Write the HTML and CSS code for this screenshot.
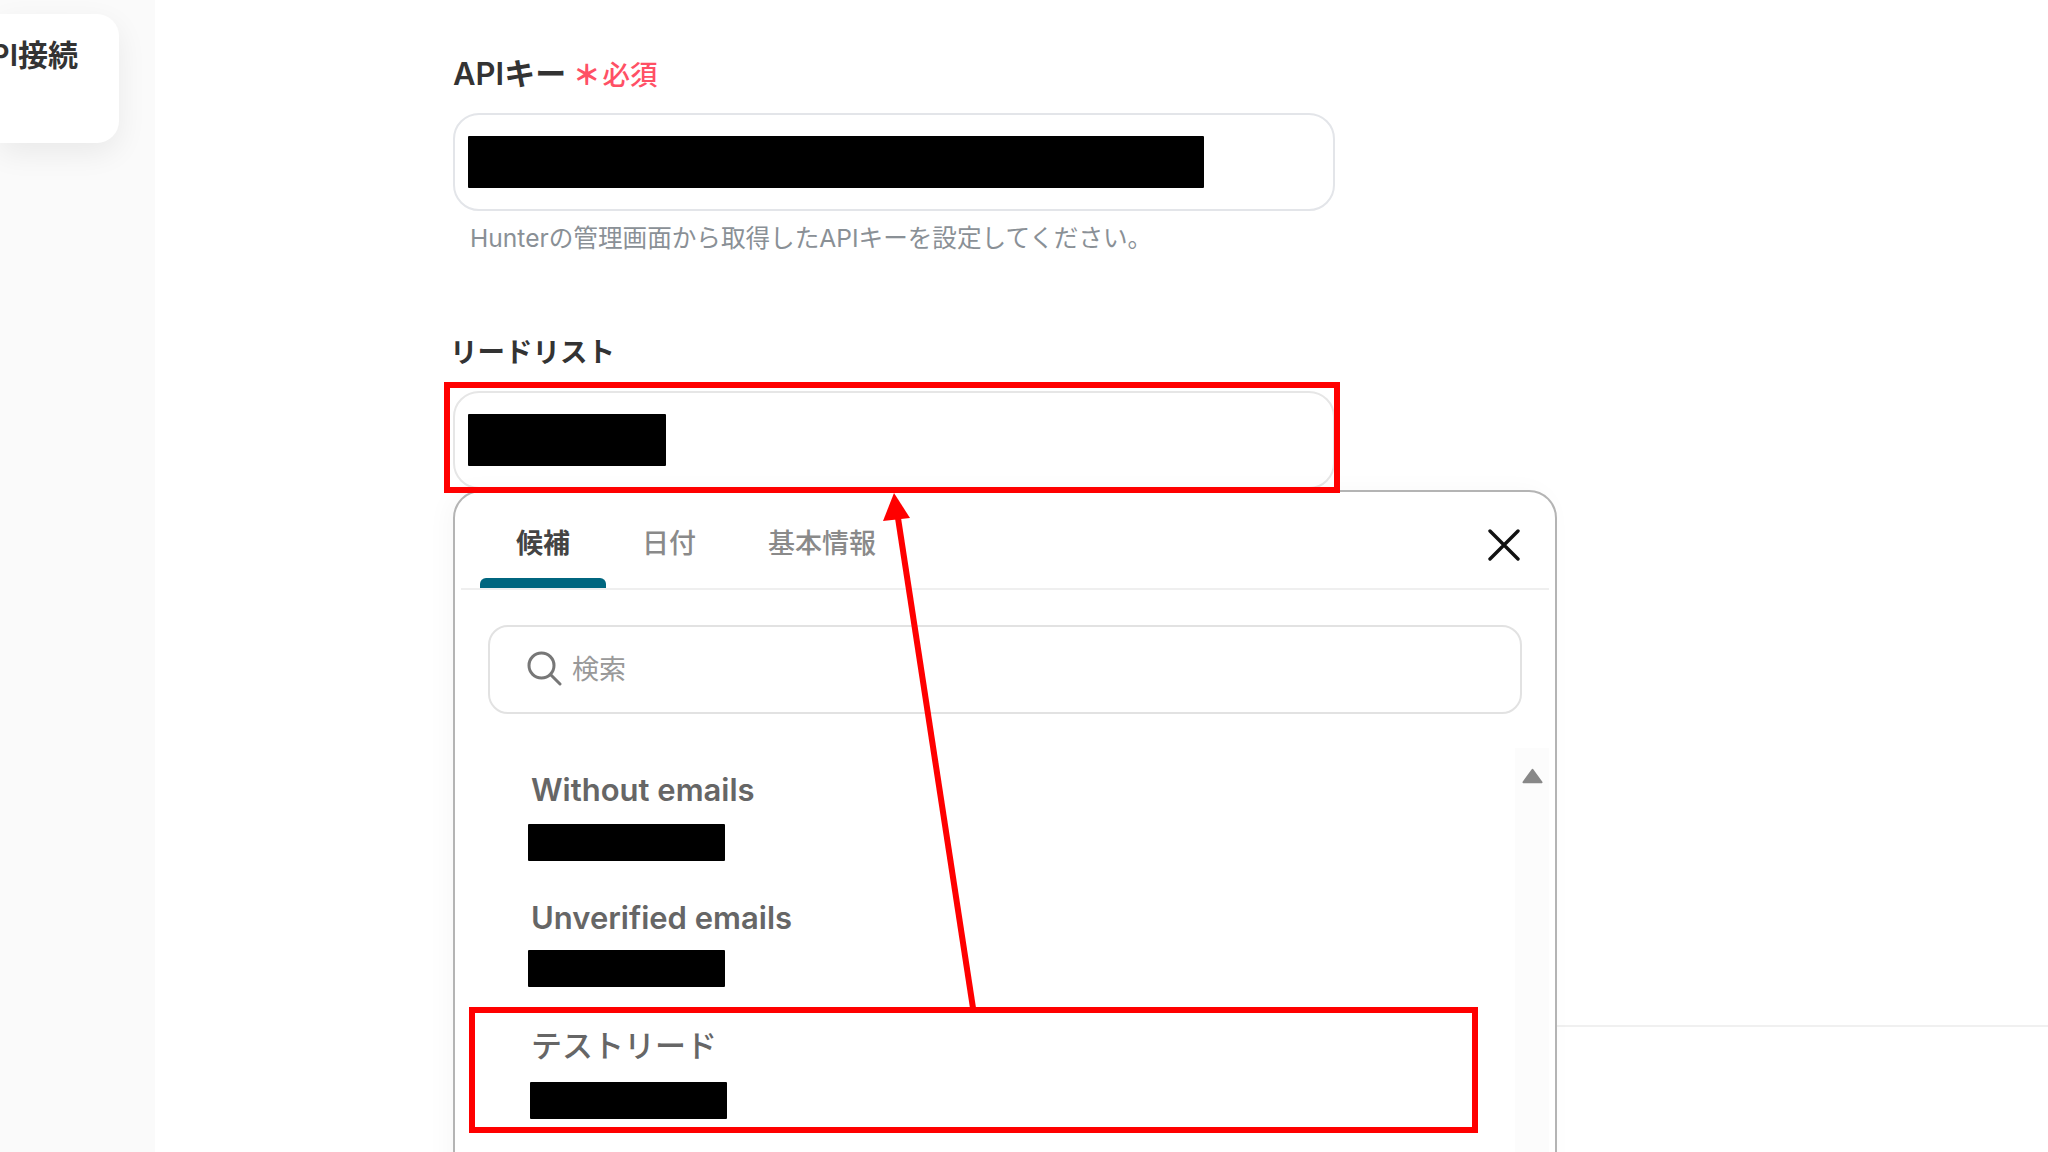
FILE: index.html
```html
<!DOCTYPE html>
<html lang="ja">
<head>
  <meta charset="UTF-8">
  <meta name="viewport" content="width=device-width, initial-scale=1.0">
  <title>API接続</title>
  <link rel="stylesheet" href="styles.css">
</head>
<body>
  <div class="page">
    <aside class="sidebar">
      <div class="side-card">
        <span class="side-title">API接続</span>
      </div>
    </aside>

    <main class="main">
      <form class="form">
        <div class="field">
          <div class="form-label form-label-key">APIキー <span class="required"><span class="required-mark">＊</span>必須</span></div>
          <div class="form-input"><span class="redacted redacted-key"></span></div>
          <p class="form-help">Hunterの管理画面から取得したAPIキーを設定してください。</p>
        </div>

        <div class="field field-list">
          <div class="form-label">リードリスト</div>
          <div class="form-input"><span class="redacted redacted-value"></span></div>

          <div class="picker">
            <div class="picker-head">
              <div class="tab tab-active">候補</div>
              <div class="tab">日付</div>
              <div class="tab">基本情報</div>
              <svg class="picker-close" viewBox="0 0 32 32" fill="none">
                <path d="M2 2L30 30M30 2L2 30" stroke="#111" stroke-width="3.4" stroke-linecap="round"/>
              </svg>
            </div>

            <div class="search">
              <svg class="search-icon" viewBox="0 0 36 36" fill="none">
                <circle cx="15.5" cy="15.5" r="12.5" stroke="#777" stroke-width="3"/>
                <path d="M25 25L34 34" stroke="#777" stroke-width="3" stroke-linecap="round"/>
              </svg>
              <span class="search-text">検索</span>
            </div>

            <div class="picker-body">
              <div class="lead-list">
                <div class="lead-item">
                  <div class="lead-name">Without emails</div>
                  <span class="redacted redacted-id"></span>
                </div>
                <div class="lead-item">
                  <div class="lead-name">Unverified emails</div>
                  <span class="redacted redacted-id"></span>
                </div>
                <div class="lead-item">
                  <div class="lead-name">テストリード</div>
                  <span class="redacted redacted-id"></span>
                </div>
              </div>
              <div class="scrollbar">
                <svg class="scroll-arrow" viewBox="0 0 22 16">
                  <path d="M11 1.5L20.5 14.5H1.5Z" fill="#888" stroke="#888" stroke-width="2" stroke-linejoin="round"/>
                </svg>
              </div>
            </div>
          </div>
        </div>
      </form>

      <div class="footer-rule"></div>
    </main>
  </div>

  <!-- red markup drawn over the screenshot -->
  <svg class="markup" viewBox="0 0 2048 1152" fill="none">
    <rect x="447" y="385" width="890" height="105" stroke="#ff0000" stroke-width="6"/>
    <rect x="472" y="1010" width="1003" height="120" stroke="#ff0000" stroke-width="6"/>
    <path d="M973 1008L898 518" stroke="#ff0000" stroke-width="6"/>
    <path d="M894 493L910 518L883 521Z" fill="#ff0000"/>
  </svg>
</body>
</html>
```

FILE: styles.css
```css
:root {
  --text: #333;
  --text-muted: #8a9096;
  --text-item: #666;
  --line: #e3e5e9;
  --teal: #00667f;
  --pink: #ff5065;
}

* {
  margin: 0;
  padding: 0;
  box-sizing: border-box;
}

html, body {
  height: 100%;
  overflow: hidden;
}

body {
  font-family: Inter, "Noto Sans CJK JP", sans-serif;
  background: #fff;
  color: var(--text);
}

.page {
  display: flex;
  width: 2048px;
  height: 1152px;
  overflow: hidden;
}

.sidebar {
  flex: 0 0 155px;
  background: #fafafa;
  padding-top: 14px;
}

.side-card {
  display: flex;
  justify-content: flex-end;
  width: 119px;
  height: 129px;
  padding: 19px 41px 0 0;
  background: white;
  border-radius: 0 22px 22px 0;
  box-shadow: 0 10px 30px rgba(0, 0, 0, 0.07);
}

.side-title {
  font-size: 30px;
  font-weight: 600;
  line-height: 44px;
  white-space: nowrap;
}

.main {
  flex: 1;
}

.form {
  width: 882px;
  margin-left: 298px;
  padding-top: 54px;
}

.field-list {
  position: relative;
  margin-top: 78px;
}

.form-label {
  height: 40px;
  margin-bottom: 19px;
  margin-left: -3px;
  font-size: 27.5px;
  font-weight: 600;
  line-height: 40px;
  white-space: nowrap;
}

.form-label-key {
  margin-left: 0;
  font-size: 31px;
}

.required {
  margin-left: -1px;
  font-size: 27.5px;
  font-weight: 500;
  color: var(--pink);
}

.required-mark {
  margin-right: 2px;
  font-weight: 900;
}

.form-input {
  height: 98px;
  padding: 21px 13px;
  background: white;
  border: 2px solid var(--line);
  border-radius: 26px;
}

.field-list .form-input {
  border-color: #e6e6e6;
}

.form-help {
  height: 32px;
  margin-top: 11px;
  padding-left: 17px;
  font-size: 24.6px;
  line-height: 32px;
  color: var(--text-muted);
  white-space: nowrap;
}

.redacted {
  display: block;
  height: 52px;
  background: #000;
  border-radius: 1px;
}

.redacted-key {
  width: 736px;
}

.redacted-value {
  width: 198px;
}

.redacted-id {
  width: 197px;
  height: 37px;
  margin: 14px 0 0 -3px;
}

.picker {
  position: absolute;
  top: 100%;
  left: 0;
  width: 1104px;
  height: 700px;
  margin-top: 1px;
  background: white;
  border: 2px solid #b4b4b4;
  border-radius: 28px;
  box-shadow: -6px 0 24px rgba(0, 0, 0, 0.03);
}

.picker-head {
  display: flex;
  align-items: center;
  position: relative;
  height: 98px;
  margin: 0 6px;
  padding: 8px 0 0 19px;
  border-bottom: 2px solid #efefef;
}

.tab {
  position: relative;
  padding: 0 36px;
  font-size: 27px;
  line-height: 40px;
  font-weight: 500;
  color: #8a8a8a;
}

.tab-active {
  font-weight: 700;
  color: #444;
}

.tab-active::after {
  content: "";
  position: absolute;
  left: 0;
  right: 0;
  top: 54px;
  height: 10px;
  background: var(--teal);
  border-radius: 6px 6px 0 0;
}

.picker-close {
  position: absolute;
  right: 29px;
  top: 37px;
  width: 32px;
  height: 32px;
}

.search {
  display: flex;
  align-items: center;
  gap: 10px;
  height: 89px;
  margin: 35px 33px 0;
  padding: 0 0 4px 36px;
  border: 2px solid #e2e2e2;
  border-radius: 20px;
}

.search-icon {
  width: 36px;
  height: 36px;
}

.search-text {
  font-size: 27px;
  color: #999;
}

.picker-body {
  display: flex;
  height: 420px;
  margin: 34px 6px 0 0;
}

.lead-list {
  flex: 1;
  padding: 22px 0 0 76px;
}

.lead-item {
  height: 128px;
}

.lead-item:nth-child(2) .redacted {
  margin-top: 12px;
}

.lead-item:nth-child(3) .redacted {
  margin: 16px 0 0 -1px;
}

.lead-name {
  height: 40px;
  font-size: 31px;
  font-weight: 600;
  line-height: 40px;
  color: var(--text-item);
  white-space: nowrap;
}

.lead-item:nth-child(3) .lead-name {
  font-weight: 500;
}

.scrollbar {
  flex: 0 0 34px;
  padding: 20px 6px 0 7px;
  background: #fcfcfc;
}

.scroll-arrow {
  display: block;
  width: 21px;
  height: 16px;
}

.footer-rule {
  margin: 536px 0 0 1402px;
  border-top: 2px solid #f0f0f0;
}

.markup {
  position: absolute;
  top: 0;
  left: 0;
  width: 2048px;
  height: 1152px;
  pointer-events: none;
}
```
